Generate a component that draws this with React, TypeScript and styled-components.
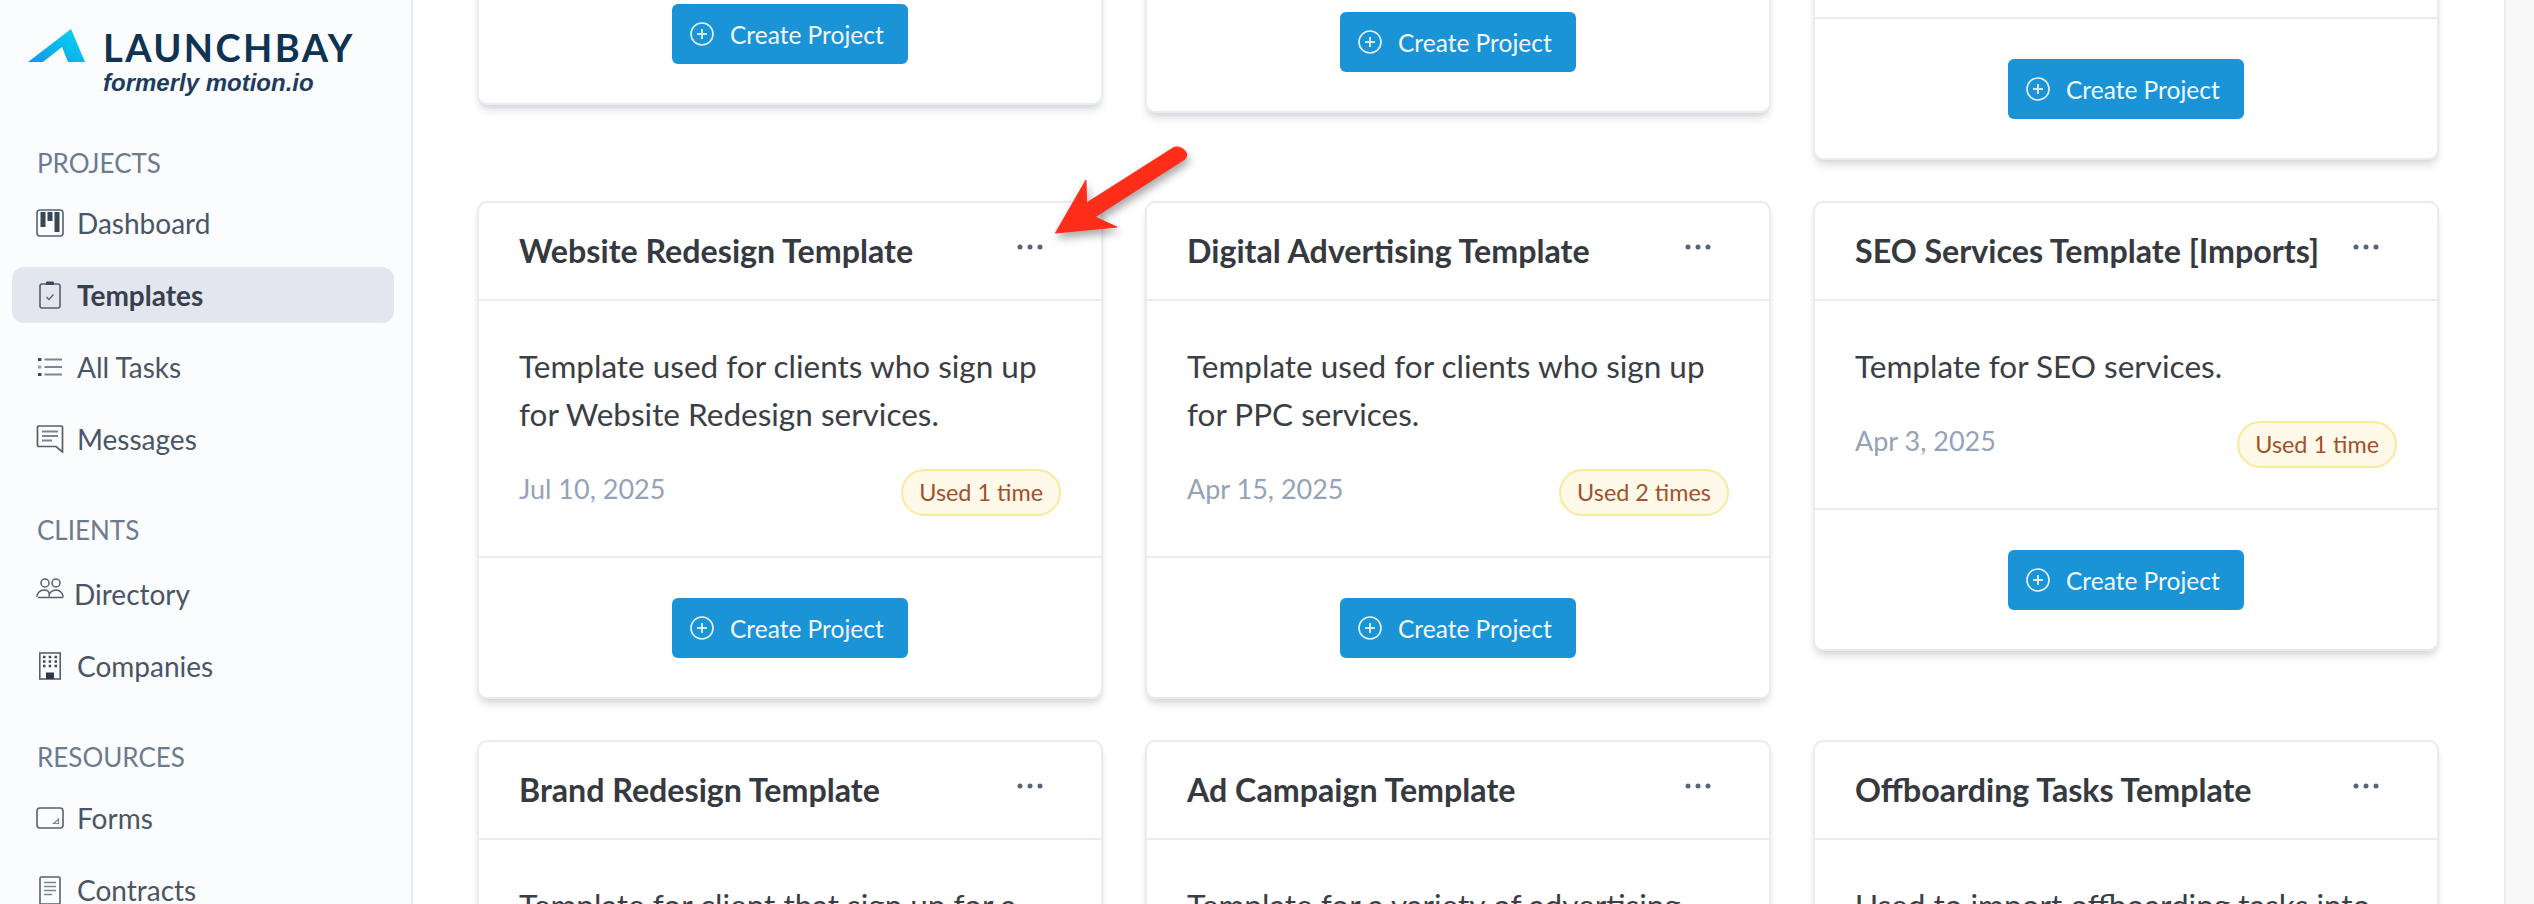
import React from 'react';
import styled, { createGlobalStyle } from 'styled-components';

const GlobalStyle = createGlobalStyle`
  html, body {
    margin: 0;
    padding: 0;
    background: #fff;
    font-family: Lato, 'Open Sans', sans-serif;
  }
  * {
    box-sizing: border-box;
  }
`;

const IconStroke = '#55606f';

const DashboardIcon = () => (
  <svg width="28" height="28" viewBox="0 0 28 28" fill="none">
    <rect x="1" y="1" width="26" height="26" rx="3" stroke={IconStroke} strokeWidth="1.6" />
    <rect x="4.5" y="3" width="5" height="15" fill="#3b4657" />
    <rect x="11.5" y="3" width="5" height="9" fill="#3b4657" />
    <rect x="18.5" y="3" width="5" height="20" fill="#3b4657" />
  </svg>
);

const TemplatesIcon = () => (
  <svg width="28" height="28" viewBox="0 0 28 28" fill="none">
    <rect x="4" y="3" width="20" height="24" rx="2" stroke={IconStroke} strokeWidth="1.6" />
    <rect x="10" y="0.5" width="8" height="3.5" rx="1" fill="#3b4657" />
    <path d="M10.5 16l2.4 2.4 4.6-4.8" stroke={IconStroke} strokeWidth="1.4" />
  </svg>
);

const TasksIcon = () => (
  <svg width="28" height="28" viewBox="0 0 28 28" fill="none">
    <rect x="2" y="5" width="3.4" height="3" fill="#3b4657" />
    <rect x="2" y="12.5" width="3.4" height="3" fill="#9aa3b0" />
    <rect x="2" y="20" width="3.4" height="3" fill="#3b4657" />
    <path d="M8.5 6.5H26M8.5 14H26M8.5 21.5H26" stroke="#7b8593" strokeWidth="2" />
  </svg>
);

const MessagesIcon = () => (
  <svg width="28" height="28" viewBox="0 0 28 28" fill="none">
    <path
      d="M2.5 1h23a1 1 0 0 1 1 1v25l-6.500-5.500H2.500a1 1 0 0 1-1-1V2a1 1 0 0 1 1-1z"
      stroke={IconStroke}
      strokeWidth="1.7"
    />
    <path d="M6 6.500h16M6 11h16M6 15.500h10" stroke="#7b8593" strokeWidth="1.800" />
  </svg>
);

const DirectoryIcon = () => (
  <svg width="28" height="28" viewBox="0 0 28 28" fill="none">
    <circle cx="9" cy="9" r="4" stroke={IconStroke} strokeWidth="1.5" />
    <circle cx="20" cy="9" r="4" stroke={IconStroke} strokeWidth="1.5" />
    <path
      d="M1 23c0-4 3-7 7-7 3 0 5 1.500 5.500 4M13 22.500c0-4 3.500-6.500 7-6.500s7 3 7 6.500c0 .8-.5 1-1 1H2"
      stroke={IconStroke}
      strokeWidth="1.500"
    />
  </svg>
);

const CompaniesIcon = () => (
  <svg width="28" height="28" viewBox="0 0 28 28" fill="none">
    <rect x="3.800" y="1" width="20.400" height="26" stroke={IconStroke} strokeWidth="1.600" />
    <path
      d="M7 5h2.500M12.700 5h2.500M18.500 5H21M7 9.500h2.500M12.700 9.500h2.500M18.500 9.500H21M7 14h2.500M12.700 14h2.500M18.500 14H21"
      stroke="#3b4657"
      strokeWidth="2.400"
    />
    <rect x="10" y="20.500" width="8" height="6.500" fill="#2d3846" />
  </svg>
);

const FormsIcon = () => (
  <svg width="28" height="28" viewBox="0 0 28 28" fill="none">
    <rect x="1" y="4" width="26" height="20" rx="3" stroke={IconStroke} strokeWidth="1.600" />
    <path d="M17.500 19.500l5-4.500v4.500z" stroke="#7b8593" strokeWidth="1.200" />
  </svg>
);

const ContractsIcon = () => (
  <svg width="28" height="28" viewBox="0 0 28 28" fill="none">
    <path d="M5.500 1h17a1.500 1.500 0 0 1 1.500 1.500V28H4V2.500A1.500 1.500 0 0 1 5.500 1z" stroke={IconStroke} strokeWidth="1.600" />
    <path d="M8 6.500h12M8 10.500h12M8 14.500h12M8 18.500h8" stroke="#7b8593" strokeWidth="1.700" />
  </svg>
);

const PlusCircleIcon = () => (
  <svg width="24" height="24" viewBox="0 0 24 24" fill="none">
    <circle cx="12" cy="12" r="11" stroke="#e4f3fb" strokeWidth="1.600" />
    <path d="M12 7v10M7 12h10" stroke="#cfe9f7" strokeWidth="2" />
  </svg>
);

const DotsIcon = () => (
  <svg width="26" height="6" viewBox="0 0 26 6" fill="#56657a">
    <circle cx="3" cy="3" r="2.500" />
    <circle cx="13" cy="3" r="2.500" />
    <circle cx="23" cy="3" r="2.500" />
  </svg>
);

const Page = styled.div`
  display: flex;
  width: 2534px;
  height: 904px;
  overflow: hidden;
  position: relative;
  background: #fff;
`;

const Sidebar = styled.aside`
  flex: 0 0 413px;
  background: #fbfcfe;
  border-right: 2px solid #e8ebf1;
  padding: 29px 17px 0 12px;
  overflow: hidden;
`;

const Brand = styled.div`
  display: grid;
  grid-template-columns: 57px auto;
  column-gap: 18px;
  padding-left: 16px;
  height: 119px;
`;

const BrandMark = styled.svg`
  display: block;
`;

const BrandText = styled.div`
  display: flex;
  flex-direction: column;
`;

const BrandName = styled.div`
  font-size: 38px;
  line-height: 36px;
  height: 40px;
  font-weight: 700;
  letter-spacing: 2.400px;
  color: #0f3352;
`;

const BrandNote = styled.div`
  font-family: 'Liberation Sans', Arial, sans-serif;
  font-size: 24px;
  line-height: 28px;
  font-style: italic;
  font-weight: 700;
  color: #1f3c5e;
`;

const NavSection = styled.section`
  margin-bottom: 48px;
`;

const NavLabel = styled.div<{ $gap: number }>`
  height: 30px;
  line-height: 30px;
  margin-bottom: ${({ $gap }) => $gap}px;
  padding-left: 25px;
  font-size: 26px;
  color: #6d7b8f;
`;

const NavList = styled.nav`
  display: flex;
  flex-direction: column;
  gap: 16px;
`;

const NavItem = styled.a<{ $active?: boolean; $gap?: number }>`
  display: flex;
  align-items: center;
  height: 56px;
  padding-left: 24px;
  gap: ${({ $gap }) => $gap ?? 13}px;
  border-radius: 12px;
  font-size: 28px;
  font-weight: ${({ $active }) => ($active ? 700 : 400)};
  color: ${({ $active }) => ($active ? '#36404f' : '#4a5565')};
  background: ${({ $active }) => ($active ? '#e3e6ee' : 'transparent')};
`;

const NavIcon = styled.span<{ $shift?: number }>`
  display: flex;
  flex: 0 0 28px;
  transform: translateY(${({ $shift }) => $shift ?? 0}px);
`;

const Main = styled.main`
  flex: 1;
  min-width: 0;
  padding: 0 64px;
`;

const CardGrid = styled.div`
  display: grid;
  grid-template-columns: repeat(3, 626px);
  column-gap: 42px;
  row-gap: 41px;
  align-items: start;
  margin-top: -61px;
`;

const Card = styled.article<{ $height?: number }>`
  display: flex;
  flex-direction: column;
  justify-content: flex-end;
  height: ${({ $height }) => ($height ? `${$height}px` : 'auto')};
  background: #fff;
  border: 2px solid #e8ebf1;
  border-radius: 10px;
  box-shadow: 0 8px 10px -3px rgba(30, 41, 59, 0.14), 0 3px 6px -2px rgba(30, 41, 59, 0.1);
`;

const CardHeader = styled.header`
  display: flex;
  justify-content: space-between;
  height: 98px;
  padding: 0 58px 0 40px;
  border-bottom: 2px solid #e8ebf1;
`;

const CardTitle = styled.h3`
  margin: 0;
  font-size: 32.200px;
  line-height: 96px;
  font-weight: 700;
  white-space: nowrap;
  color: #36393f;
`;

const MenuButton = styled.button`
  display: flex;
  align-self: flex-start;
  margin: 41px 0 0;
  padding: 0;
  border: 0;
  background: none;
`;

const CardBody = styled.div`
  padding: 41px 40px 40px;
`;

const Description = styled.p`
  margin: 0 0 31px;
  font-size: 31.500px;
  line-height: 48px;
  color: #3b3e44;
`;

const MetaRow = styled.div`
  display: flex;
  justify-content: space-between;
  align-items: flex-start;
`;

const DateText = styled.span`
  font-size: 27px;
  line-height: 40px;
  color: #94a3b8;
`;

const UsageBadge = styled.span`
  height: 47px;
  padding: 0 16px;
  line-height: 43px;
  font-size: 23.400px;
  white-space: nowrap;
  color: #a2522a;
  background: #fef9e9;
  border: 2px solid #fde79a;
  border-radius: 24px;
`;

const CardFooter = styled.footer`
  display: flex;
  justify-content: center;
  padding: 40px 0 39px;
  border-top: 2px solid #e8ebf1;
`;

const CreateButton = styled.button`
  display: flex;
  align-items: center;
  gap: 16px;
  width: 236px;
  height: 60px;
  padding: 0 0 0 18px;
  border: 0;
  border-radius: 6px;
  font-family: inherit;
  font-size: 24.500px;
  color: #f2f9fd;
  background: #1a94d6;
`;

const ScrollTrack = styled.div`
  flex: 0 0 30px;
  background: #f8f8f8;
  border-left: 2px solid #eeeeee;
`;

const Arrow = styled.svg`
  position: absolute;
  left: 1040px;
  top: 135px;
  filter: drop-shadow(2px 5px 4px rgba(60, 60, 60, 0.45));
`;

const NAV = [
  {
    label: 'PROJECTS',
    gap: 17,
    items: [
      { name: 'Dashboard', icon: <DashboardIcon /> },
      { name: 'Templates', icon: <TemplatesIcon />, active: true },
      { name: 'All Tasks', icon: <TasksIcon /> },
      { name: 'Messages', icon: <MessagesIcon /> },
    ],
  },
  {
    label: 'CLIENTS',
    gap: 21,
    items: [
      { name: 'Directory', icon: <DirectoryIcon />, gap: 10, shift: -6 },
      { name: 'Companies', icon: <CompaniesIcon /> },
    ],
  },
  {
    label: 'RESOURCES',
    gap: 18,
    items: [
      { name: 'Forms', icon: <FormsIcon /> },
      { name: 'Contracts', icon: <ContractsIcon /> },
    ],
  },
];

const TOP_CARD_HEIGHTS = [166, 174, 221];

const TEMPLATES = [
  {
    title: 'Website Redesign Template',
    text: 'Template used for clients who sign up for Website Redesign services.',
    date: 'Jul 10, 2025',
    used: 'Used 1 time',
  },
  {
    title: 'Digital Advertising Template',
    text: 'Template used for clients who sign up for PPC services.',
    date: 'Apr 15, 2025',
    used: 'Used 2 times',
  },
  {
    title: 'SEO Services Template [Imports]',
    text: 'Template for SEO services.',
    date: 'Apr 3, 2025',
    used: 'Used 1 time',
  },
];

const CUT_TEMPLATES = [
  { title: 'Brand Redesign Template', text: 'Template for client that sign up for a' },
  { title: 'Ad Campaign Template', text: 'Template for a variety of advertising' },
  { title: 'Offboarding Tasks Template', text: 'Used to import offboarding tasks into' },
];

const CreateProject = () => (
  <CardFooter>
    <CreateButton>
      <PlusCircleIcon />
      Create Project
    </CreateButton>
  </CardFooter>
);

const Header = ({ title }: { title: string }) => (
  <CardHeader>
    <CardTitle>{title}</CardTitle>
    <MenuButton>
      <DotsIcon />
    </MenuButton>
  </CardHeader>
);

const App = () => {
  return (
    <Page>
      <GlobalStyle />
      <Sidebar>
        <Brand>
          <BrandMark width="57" height="34" viewBox="0 0 57 34">
            <defs>
              <linearGradient id="launch" x1="0" y1="1" x2="1" y2="0">
                <stop offset="0" stopColor="#1497ea" />
                <stop offset="0.7" stopColor="#06c6ee" />
                <stop offset="1" stopColor="#05d5f2" />
              </linearGradient>
            </defs>
            <path d="M0 33L43 0l14 33H40l-6-15-19 15z" fill="url(#launch)" />
          </BrandMark>
          <BrandText>
            <BrandName>LAUNCHBAY</BrandName>
            <BrandNote>formerly motion.io</BrandNote>
          </BrandText>
        </Brand>
        {NAV.map((section) => (
          <NavSection key={section.label}>
            <NavLabel $gap={section.gap}>{section.label}</NavLabel>
            <NavList>
              {section.items.map((item: any) => (
                <NavItem key={item.name} $active={item.active} $gap={item.gap}>
                  <NavIcon $shift={item.shift}>{item.icon}</NavIcon>
                  {item.name}
                </NavItem>
              ))}
            </NavList>
          </NavSection>
        ))}
      </Sidebar>
      <Main>
        <CardGrid>
          {TOP_CARD_HEIGHTS.map((height) => (
            <Card key={height} $height={height}>
              <CreateProject />
            </Card>
          ))}
          {TEMPLATES.map((item) => (
            <Card key={item.title}>
              <Header title={item.title} />
              <CardBody>
                <Description>{item.text}</Description>
                <MetaRow>
                  <DateText>{item.date}</DateText>
                  <UsageBadge>{item.used}</UsageBadge>
                </MetaRow>
              </CardBody>
              <CreateProject />
            </Card>
          ))}
          {CUT_TEMPLATES.map((item) => (
            <Card key={item.title}>
              <Header title={item.title} />
              <CardBody>
                <Description>{item.text}</Description>
              </CardBody>
            </Card>
          ))}
        </CardGrid>
      </Main>
      <ScrollTrack />
      <Arrow width="150" height="110" viewBox="0 0 150 110">
        <path
          d="M15.500 98L46 45l.500 23L133 13c6-4 18 4 12 11L55 82l22 10z"
          fill="#ff2d1a"
          stroke="#ff2d1a"
          strokeLinejoin="round"
        />
      </Arrow>
    </Page>
  );
};

export default App;
